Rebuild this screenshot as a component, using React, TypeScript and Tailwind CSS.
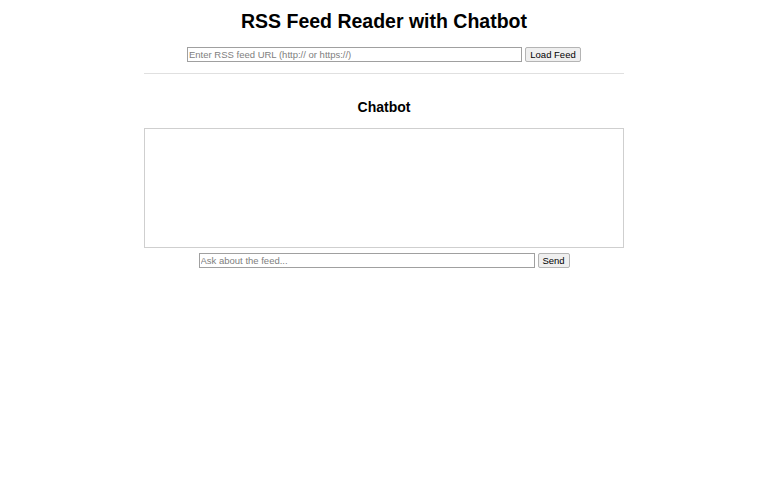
import React from "react";

export default function App() {
  return (
    <div className="min-h-[480px] w-full bg-white pt-[8px]" style={{ fontFamily: '"Liberation Sans", Arial, sans-serif' }}>
      <div className="mx-auto w-[480px]">
        <h1 className="flex h-[28px] items-center justify-center text-[19.5px] font-bold text-black">
          RSS Feed Reader with Chatbot
        </h1>
        <div className="mt-[11px] flex h-[15px] justify-center gap-[3px]">
          <input
            type="text"
            placeholder="Enter RSS feed URL (http:// or https://)"
            className="h-[15px] w-[335px] border border-[#a0a0a0] bg-white px-[1px] text-[9.5px] leading-none text-black outline-none placeholder:text-[#808080]"
          />
          <button className="h-[15px] w-[56px] rounded-[2px] border border-[#b4b4b4] bg-[#efefef] p-0 text-[9.5px] leading-none text-black">
            Load Feed
          </button>
        </div>
        <div className="mt-[11px] h-px w-full bg-[#e0e0e0]" />
        <h2 className="mt-[23px] flex h-[20px] items-center justify-center text-[14px] font-bold text-black">
          Chatbot
        </h2>
        <div className="mt-[11px] h-[120px] w-full border border-[#cfcfcf] bg-white" />
        <div className="mt-[5px] flex h-[15px] justify-center gap-[3px]">
          <input
            type="text"
            placeholder="Ask about the feed..."
            className="h-[15px] w-[336px] border border-[#a0a0a0] bg-white px-[1px] text-[9.5px] leading-none text-black outline-none placeholder:text-[#808080]"
          />
          <button className="h-[15px] w-[32px] rounded-[2px] border border-[#b4b4b4] bg-[#efefef] p-0 text-[9.5px] leading-none text-black">
            Send
          </button>
        </div>
      </div>
    </div>
  );
}
